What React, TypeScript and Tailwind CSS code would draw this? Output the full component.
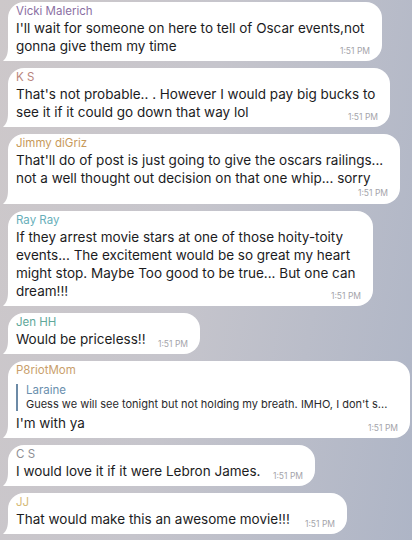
const messages = [
  {
    name: 'Vicki Malerich',
    nameColor: 'text-[#8b6fa3]',
    width: 'w-[374px]',
    lines: ["I'll wait for someone on here to tell of Oscar events,not", 'gonna give them my time'],
    timeBelow: false
  },
  {
    name: 'K S',
    nameColor: 'text-[#b9847c]',
    width: 'w-[382px]',
    lines: ["That's not probable.. . However I would pay big bucks to", 'see it if it could go down that way lol'],
    timeBelow: false
  },
  {
    name: 'Jimmy diGriz',
    nameColor: 'text-[#c89a5b]',
    width: 'w-[392px]',
    lines: ["That'll do of post is just going to give the oscars railings...", 'not a well thought out decision on that one whip... sorry'],
    timeBelow: true
  },
  {
    name: 'Ray Ray',
    nameColor: 'text-[#68afba]',
    width: 'w-[365px]',
    lines: [
      'If they arrest movie stars at one of those hoity-toity',
      'events... The excitement would be so great my heart',
      'might stop. Maybe Too good to be true... But one can',
      'dream!!!'
    ],
    timeBelow: false
  },
  {
    name: 'Jen HH',
    nameColor: 'text-[#5fa89a]',
    width: 'w-[192px]',
    lines: ['Would be priceless!!'],
    timeBelow: false
  },
  {
    name: 'P8riotMom',
    nameColor: 'text-[#c9a06c]',
    width: 'w-[402px]',
    reply: {
      name: 'Laraine',
      text: "Guess we will see tonight but not holding my breath. IMHO, I don't s..."
    },
    lines: ["I'm with ya"],
    timeBelow: false
  },
  {
    name: 'C S',
    nameColor: 'text-[#8e8e94]',
    width: 'w-[307px]',
    lines: ['I would love it if it were Lebron James.'],
    timeBelow: false
  },
  {
    name: 'JJ',
    nameColor: 'text-[#d6bb7a]',
    width: 'w-[339px]',
    lines: ['That would make this an awesome movie!!!'],
    timeBelow: false
  }
];

function Tail() {
  return (
    <svg className="absolute bottom-0 left-[-5px]" width="8" height="14" viewBox="0 0 8 14">
      <path d="M8 0 H5 C5 7 3.5 11 0 14 H8 Z" fill="#ffffff" />
    </svg>
  );
}

function Time() {
  return <span className="shrink-0 text-[8.5px] leading-[10px] text-[#a4a4aa]">1:51 PM</span>;
}

export default function App() {
  return (
    <main
      className="flex h-[540px] w-[412px] flex-col gap-[7px] overflow-hidden bg-[linear-gradient(100deg,#cdc8ca_0%,#c6c5cc_45%,#aeb5c6_100%)] pl-[8px] pt-[2px] text-[#1c1c1e]"
      style={{ fontFamily: 'Inter, "Noto Sans", sans-serif' }}
    >
      {messages.map((m) => {
        const last = m.lines.length - 1;
        return (
          <div key={m.name} className={`relative rounded-[16px] rounded-bl-none bg-white pb-[6px] pl-[8px] pr-[12px] pt-[2px] ${m.width}`}>
            <Tail />
            <div className={`text-[11.5px] leading-[15px] ${m.nameColor}`}>{m.name}</div>
            {m.reply && (
              <div className="mb-[3px] mt-[6px] border-l-2 border-[#6c8aa6] pl-[8px]">
                <div className="text-[11.5px] leading-[13px] text-[#6a8fae]">{m.reply.name}</div>
                <div className="truncate text-[11px] leading-[14px] text-[#2a2a2c]">{m.reply.text}</div>
              </div>
            )}
            {m.lines.map((line, i) =>
              i === last && !m.timeBelow ? (
                <div key={i} className="flex items-end justify-between gap-3 text-[13.5px] leading-[18px]">
                  <span className="whitespace-nowrap">{line}</span>
                  <span className="mb-[-3px]">
                    <Time />
                  </span>
                </div>
              ) : (
                <div key={i} className="whitespace-nowrap text-[13.5px] leading-[18px]">
                  {line}
                </div>
              )
            )}
            {m.timeBelow && (
              <div className="mt-[1px] flex justify-end">
                <Time />
              </div>
            )}
          </div>
        );
      })}
    </main>
  );
}
